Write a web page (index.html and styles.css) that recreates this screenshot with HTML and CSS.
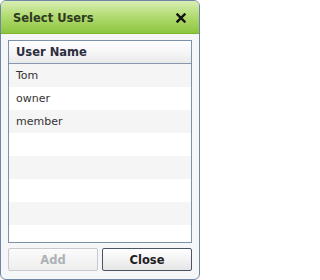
FILE: index.html
```html
<!DOCTYPE html>
<html>
<head>
<meta charset="utf-8">
<link rel="stylesheet" href="styles.css">
</head>
<body>
<div class="dialog">
  <div class="titlebar">
    <span class="title">Select Users</span>
    <svg class="close-icon" width="10" height="10" viewBox="0 0 10 10">
      <path d="M1.5 1.5 L8.5 8.5 M8.5 1.5 L1.5 8.5" stroke="#111" stroke-width="2.4" stroke-linecap="square"/>
    </svg>
  </div>
  <div class="body">
    <div class="list">
      <div class="list-header">User Name</div>
      <div class="rows">
        <div class="row odd">Tom</div>
        <div class="row">owner</div>
        <div class="row odd">member</div>
        <div class="row"></div>
        <div class="row odd"></div>
        <div class="row"></div>
        <div class="row odd"></div>
        <div class="row"></div>
      </div>
    </div>
    <div class="buttons">
      <button class="btn btn-disabled">Add</button>
      <button class="btn btn-primary">Close</button>
    </div>
  </div>
</div>
</body>
</html>
```
FILE: styles.css
```css
html, body {
  margin: 0;
  padding: 0;
  background: #ffffff;
}
.dialog {
  width: 200px;
  height: 280px;
  box-sizing: border-box;
  border: 1px solid #6f86a4;
  border-radius: 6px;
  overflow: hidden;
  background: #f5f6f8;
  display: flex;
  flex-direction: column;
  font-family: "DejaVu Sans", Verdana, sans-serif;
}
.titlebar {
  height: 32px;
  flex: none;
  border-bottom: 1px solid #7fb432;
  background: linear-gradient(to bottom, #d9eeb6 0%, #b4dc74 45%, #8cc63e 100%);
  display: flex;
  align-items: center;
  justify-content: space-between;
  padding: 0 13px 0 12px;
}
.title {
  font-weight: bold;
  font-size: 11.5px;
  color: #2f3a22;
  padding-top: 1px;
}
.close-icon {
  display: block;
  margin-top: 1px;
}
.body {
  flex: 1;
  display: flex;
  flex-direction: column;
  padding: 6px 7px 7px 7px;
  gap: 5px;
}
.list {
  height: 203px;
  box-sizing: border-box;
  border: 1px solid #7d91ab;
  background: #ffffff;
  overflow: hidden;
  flex: none;
}
.list-header {
  height: 22px;
  border-bottom: 1px solid #8797ad;
  background: linear-gradient(to bottom, #ffffff 0%, #f4f4f4 60%, #e9e9e9 100%);
  font-weight: bold;
  font-size: 11.5px;
  color: #2d2d3f;
  display: flex;
  align-items: center;
  padding-left: 7px;
}
.row {
  height: 23px;
  display: flex;
  align-items: center;
  padding-left: 7px;
  font-size: 11px;
  color: #333333;
  background: #ffffff;
}
.row.odd {
  background: #f5f5f5;
}
.buttons {
  display: flex;
  gap: 4px;
}
.btn {
  flex: 1;
  height: 23px;
  box-sizing: border-box;
  border-radius: 2px;
  font-family: "DejaVu Sans", Verdana, sans-serif;
  font-weight: bold;
  font-size: 11.5px;
  padding: 0;
  margin: 0;
}
.btn-disabled {
  border: 1px solid #c6cacf;
  background: linear-gradient(to bottom, #fbfbfb, #eeeeee);
  color: #aeb2b6;
}
.btn-primary {
  border: 1px solid #4b5465;
  background: linear-gradient(to bottom, #ffffff, #e6e6e6);
  color: #1e1e1e;
}
```
